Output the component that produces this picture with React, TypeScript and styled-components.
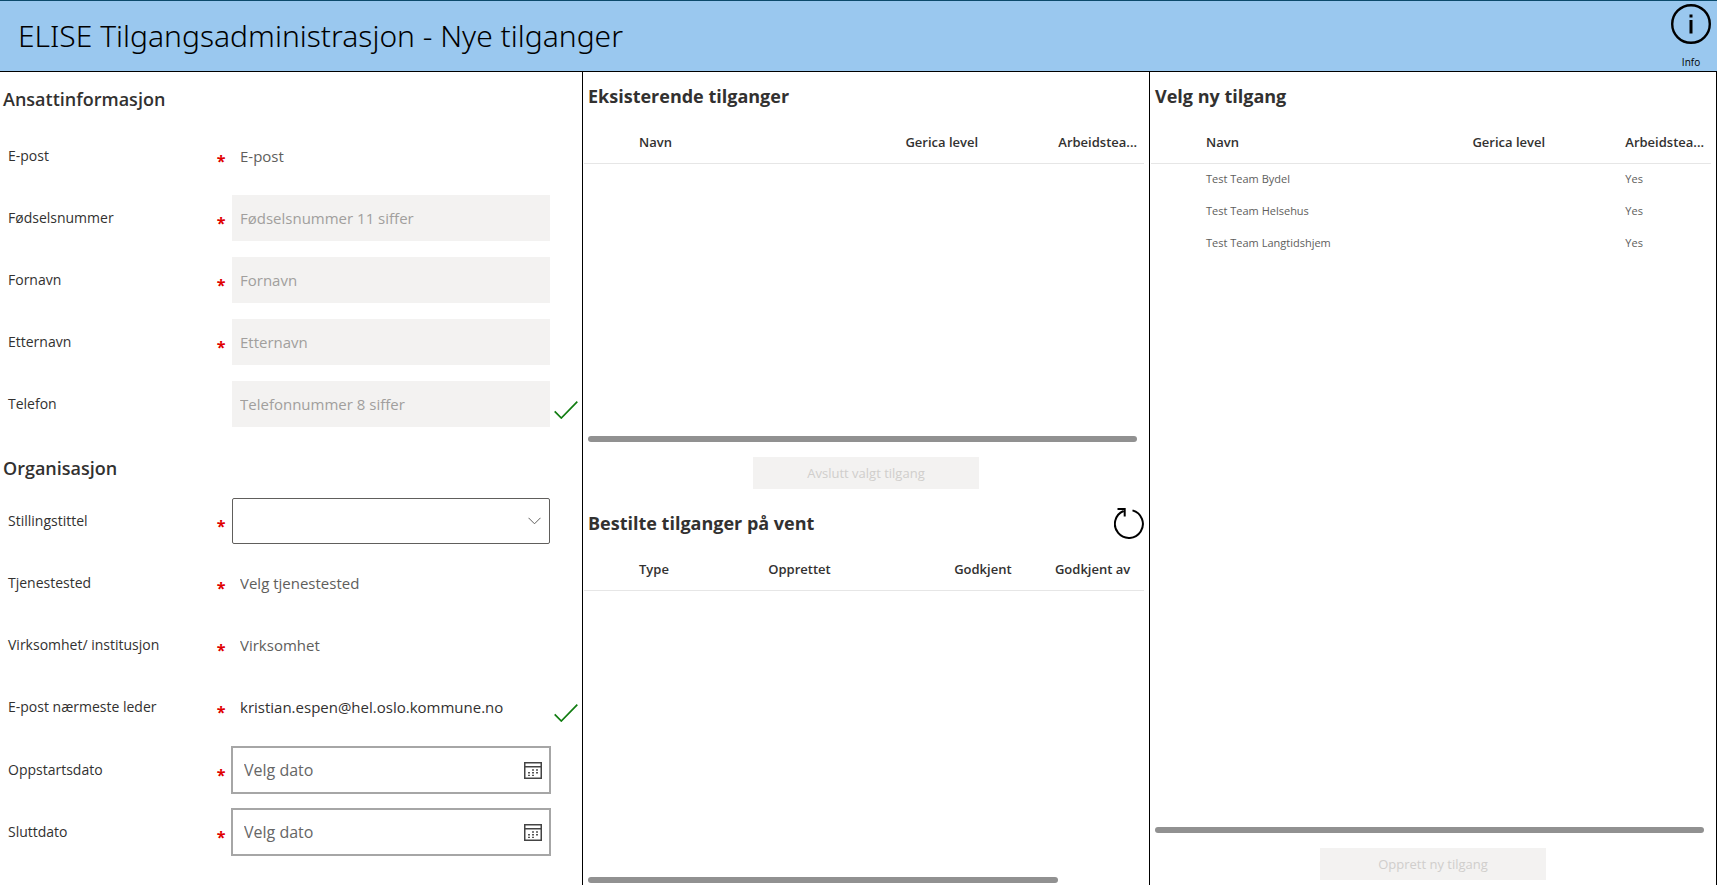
import React from "react";
import styled, { createGlobalStyle } from "styled-components";

const GlobalStyle = createGlobalStyle`
  *, *::before, *::after { box-sizing: border-box; }
  body {
    margin: 0;
    background: #fff;
    color: #323130;
    font-family: "Open Sans", "Segoe UI", "Noto Sans", sans-serif;
  }
  button, input, select { font-family: inherit; }
`;

const Page = styled.div`
  display: flex;
  flex-direction: column;
  min-height: 100vh;
  padding-right: 1px;
`;

const Header = styled.header`
  display: flex;
  align-items: center;
  justify-content: space-between;
  height: 72px;
  padding: 0 6px 0 18px;
  background: #9ac8ef;
  border-top: 1px solid #0b4a6b;
  border-bottom: 1px solid #000;
`;

const Title = styled.h1`
  margin: 0;
  color: #000;
  font-family: "Noto Sans", "Open Sans", sans-serif;
  font-size: 30px;
  font-weight: 300;
  line-height: 40px;
`;

const InfoButton = styled.button`
  display: flex;
  flex-direction: column;
  align-items: center;
  gap: 11px;
  padding: 0;
  border: 0;
  background: none;
  color: #000;
  font-size: 10px;
  line-height: 14px;
`;

const Columns = styled.main`
  flex: 1;
  display: grid;
  grid-template-columns: 583fr 567fr 567fr;
`;

const Panel = styled.section`
  display: flex;
  flex-direction: column;
  min-width: 0;
  border-right: 1px solid #000;
`;

const FormPanel = styled(Panel).attrs({ as: "form" })`
  padding: 13px 0 28px;
`;

const FormHeading = styled.h2`
  margin: 0;
  padding-left: 3px;
  font-size: 18px;
  font-weight: 600;
  line-height: 28px;
`;

const Rows = styled.div`
  display: flex;
  flex-direction: column;
  gap: 16px;
  padding: 20px 0 27px 8px;

  & + ${FormHeading} + & {
    padding-top: 16px;
    padding-bottom: 0;
  }
`;

const Row = styled.div`
  display: grid;
  grid-template-columns: 206px 18px minmax(0, 1fr) 32px;
  align-items: center;
  height: 46px;
`;

const Label = styled.label`
  font-size: 14px;
  font-weight: 500;
  line-height: 20px;
`;

const Required = styled.span`
  padding: 9px 4px 0 0;
  color: #e00000;
  font-size: 16px;
  font-weight: 700;
  line-height: 20px;
  text-align: center;
`;

const TextInput = styled.input`
  width: 100%;
  height: 46px;
  padding: 0 8px;
  border: 0;
  border-radius: 0;
  background: #fff;
  color: #323130;
  font-size: 15px;

  &::placeholder { color: #605e5c; opacity: 1; }
  &:disabled { background: #f3f2f1; }
  &:disabled::placeholder { color: #a19f9d; }
`;

const SelectWrap = styled.div`
  position: relative;
`;

const Select = styled.select`
  display: block;
  width: 100%;
  height: 46px;
  padding: 0 32px 0 8px;
  border: 1px solid #605e5c;
  border-radius: 2px;
  background: #fff;
  appearance: none;
`;

const Chevron = styled.svg`
  position: absolute;
  top: 19px;
  right: 9px;
  pointer-events: none;
`;

const DateField = styled.div`
  display: flex;
  align-items: center;
  height: 48px;
  margin: 0 -1px;
  padding-right: 7px;
  border: 2px solid #a6a6a6;
  background: #fff;
`;

const DateInput = styled.input`
  flex: 1;
  min-width: 0;
  height: 44px;
  padding: 0 11px;
  border: 0;
  background: none;
  font-size: 16px;

  &::placeholder { color: #666; opacity: 1; }
`;

const IconButton = styled.button`
  display: flex;
  padding: 0;
  border: 0;
  background: none;
  color: inherit;
`;

const CheckIcon = styled.svg`
  margin: 12px 0 0 4px;
`;

const ActionButton = styled.button`
  align-self: center;
  width: 40%;
  height: 32px;
  margin: 15px 0 5px;
  padding: 0;
  border: 0;
  background: #f3f2f1;
  color: #d0cecc;
  font-size: 13px;
  font-weight: 500;
`;

const PanelHeading = styled.div`
  display: flex;
  align-items: center;
  justify-content: space-between;
  height: 30px;
  margin: 9px 5px 0;

  ${ActionButton} + & {
    margin-top: 14px;
  }

  h2 {
    margin: 0;
    font-size: 18px;
    font-weight: 700;
    line-height: 28px;
  }
`;

const Gallery = styled.div<{ $grow: number }>`
  flex: ${(p) => p.$grow} 0 0;
  display: flex;
  flex-direction: column;
  justify-content: space-between;
  min-height: 200px;
  padding: 0 5px 0 1px;

  &:last-child {
    margin-bottom: 2px;
  }
`;

const Grid = styled.table`
  width: 100%;
  border-collapse: collapse;
  table-layout: fixed;

  th, td {
    padding: 0;
    text-align: left;
    white-space: nowrap;
  }
  th {
    height: 52px;
    padding-top: 10px;
    border-bottom: 1px solid #e6e6e6;
    font-size: 13px;
    font-weight: 600;
    line-height: 20px;
  }
  th:first-child, td:first-child { padding-left: 55px; }
  td {
    height: 32px;
    color: #605e5c;
    font-size: 11px;
    line-height: 16px;
  }
`;

const Scrollbar = styled.div<{ $length: number }>`
  width: ${(p) => p.$length}%;
  height: 6px;
  margin-left: 4px;
  border-radius: 3px;
  background: #919191;
`;

const Check = () => (
  <CheckIcon width="24" height="18" viewBox="0 0 24 18" fill="none" stroke="#107c10" strokeWidth="1.7" role="img" aria-label="Gyldig">
    <path d="M.7 10.3 7.3 17 23.3.6" />
  </CheckIcon>
);

const CalendarIcon = () => (
  <svg width="18" height="17" viewBox="0 0 18 17" fill="none" aria-hidden="true">
    <path d="M.75.75h16.5v15.5H.75zM.75 4.7h16.5" stroke="#444" strokeWidth="1.5" />
    <path d="M8 8h2M12 8h2M4 10.7h2M8 10.7h2M12 10.7h2M4 13.4h2M8 13.4h2" stroke="#555" strokeWidth="1.4" />
  </svg>
);

const InfoIcon = () => (
  <svg width="40" height="40" viewBox="0 0 40 40" fill="none" aria-hidden="true">
    <circle cx="20" cy="20" r="18.8" stroke="#000" strokeWidth="2.4" />
    <path d="M20 16v13.5M20 10.5v3" stroke="#000" strokeWidth="3" />
  </svg>
);

const RefreshIcon = () => (
  <svg width="30" height="32" viewBox="0 0 30 32" fill="none" stroke="#000" strokeWidth="2" aria-hidden="true">
    <path d="M18.5 3.4A14 14 0 1 1 9.5 4M3.5 2h7.2v7.5" />
  </svg>
);

type FieldProps = {
  id: string;
  label: string;
  placeholder?: string;
  value?: string;
  kind?: "text" | "select" | "date";
  required?: boolean;
  disabled?: boolean;
  valid?: boolean;
};

const Field = ({ id, label, placeholder, value, kind = "text", required = true, disabled, valid }: FieldProps) => (
  <Row>
    <Label htmlFor={id}>{label}</Label>
    <Required>{required ? "*" : ""}</Required>
    {kind === "text" && <TextInput id={id} placeholder={placeholder} defaultValue={value} disabled={disabled} />}
    {kind === "select" && (
      <SelectWrap>
        <Select id={id} defaultValue="">
          <option value="" />
        </Select>
        <Chevron width="13" height="8" viewBox="0 0 13 8" fill="none" stroke="#605e5c">
          <path d="M.5.8l6 6 6-6" />
        </Chevron>
      </SelectWrap>
    )}
    {kind === "date" && (
      <DateField>
        <DateInput id={id} placeholder={placeholder} />
        <IconButton type="button" aria-label={`Åpne kalender for ${label}`}>
          <CalendarIcon />
        </IconButton>
      </DateField>
    )}
    {valid && <Check />}
  </Row>
);

type Column = { name: string; width?: string };

const accessColumns: Column[] = [
  { name: "Navn", width: "57.4%" },
  { name: "Gerica level", width: "27.3%" },
  { name: "Arbeidstea..." },
];

const pendingColumns: Column[] = [
  { name: "Type", width: "32.9%" },
  { name: "Opprettet", width: "33.2%" },
  { name: "Godkjent", width: "18%" },
  { name: "Godkjent av" },
];

const teams = [
  ["Test Team Bydel", "", "Yes"],
  ["Test Team Helsehus", "", "Yes"],
  ["Test Team Langtidshjem", "", "Yes"],
];

const DataTable = ({ columns, rows = [] }: { columns: Column[]; rows?: string[][] }) => (
  <Grid>
    <colgroup>
      {columns.map((c) => (
        <col key={c.name} style={{ width: c.width }} />
      ))}
    </colgroup>
    <thead>
      <tr>
        {columns.map((c) => (
          <th key={c.name} scope="col">{c.name}</th>
        ))}
      </tr>
    </thead>
    <tbody>
      {rows.map((r) => (
        <tr key={r[0]}>
          {r.map((cell, i) => (
            <td key={i}>{cell}</td>
          ))}
        </tr>
      ))}
    </tbody>
  </Grid>
);

export default function App() {
  return (
    <>
      <GlobalStyle />
      <Page>
        <Header>
          <Title>ELISE Tilgangsadministrasjon - Nye tilganger</Title>
          <InfoButton type="button">
            <InfoIcon />
            Info
          </InfoButton>
        </Header>
        <Columns>
          <FormPanel>
            <FormHeading>Ansattinformasjon</FormHeading>
            <Rows>
              <Field id="epost" label="E-post" placeholder="E-post" />
              <Field id="fnr" label="Fødselsnummer" placeholder="Fødselsnummer 11 siffer" disabled />
              <Field id="fornavn" label="Fornavn" placeholder="Fornavn" disabled />
              <Field id="etternavn" label="Etternavn" placeholder="Etternavn" disabled />
              <Field id="telefon" label="Telefon" placeholder="Telefonnummer 8 siffer" required={false} disabled valid />
            </Rows>
            <FormHeading>Organisasjon</FormHeading>
            <Rows>
              <Field id="stilling" label="Stillingstittel" kind="select" />
              <Field id="tjenestested" label="Tjenestested" placeholder="Velg tjenestested" />
              <Field id="virksomhet" label="Virksomhet/ institusjon" placeholder="Virksomhet" />
              <Field id="leder" label="E-post nærmeste leder" value="kristian.espen@hel.oslo.kommune.no" valid />
              <Field id="oppstart" label="Oppstartsdato" placeholder="Velg dato" kind="date" />
              <Field id="slutt" label="Sluttdato" placeholder="Velg dato" kind="date" />
            </Rows>
          </FormPanel>
          <Panel>
            <PanelHeading>
              <h2>Eksisterende tilganger</h2>
            </PanelHeading>
            <Gallery $grow={331}>
              <DataTable columns={accessColumns} />
              <Scrollbar $length={98} />
            </Gallery>
            <ActionButton type="button" disabled>Avslutt valgt tilgang</ActionButton>
            <PanelHeading>
              <h2>Bestilte tilganger på vent</h2>
              <IconButton type="button" aria-label="Oppdater">
                <RefreshIcon />
              </IconButton>
            </PanelHeading>
            <Gallery $grow={345}>
              <DataTable columns={pendingColumns} />
              <Scrollbar $length={84} />
            </Gallery>
          </Panel>
          <Panel>
            <PanelHeading>
              <h2>Velg ny tilgang</h2>
            </PanelHeading>
            <Gallery $grow={1}>
              <DataTable columns={accessColumns} rows={teams} />
              <Scrollbar $length={98} />
            </Gallery>
            <ActionButton type="button" disabled>Opprett ny tilgang</ActionButton>
          </Panel>
        </Columns>
      </Page>
    </>
  );
}
